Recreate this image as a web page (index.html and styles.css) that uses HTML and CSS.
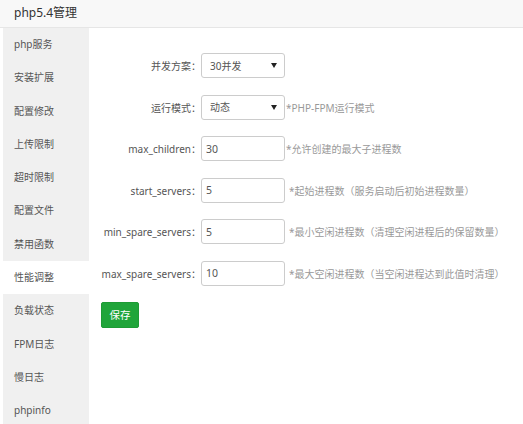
FILE: index.html
```html
<!DOCTYPE html>
<html lang="zh-CN">
<head>
<meta charset="utf-8">
<title>php5.4管理</title>
<link rel="stylesheet" href="styles.css">
</head>
<body>
<div class="header">php5.4管理</div>
<div class="main">
  <ul class="sidebar">
    <li class="side-item">php服务</li>
    <li class="side-item">安装扩展</li>
    <li class="side-item">配置修改</li>
    <li class="side-item">上传限制</li>
    <li class="side-item">超时限制</li>
    <li class="side-item">配置文件</li>
    <li class="side-item">禁用函数</li>
    <li class="side-item active">性能调整</li>
    <li class="side-item">负载状态</li>
    <li class="side-item">FPM日志</li>
    <li class="side-item">慢日志</li>
    <li class="side-item">phpinfo</li>
  </ul>
  <div class="content">
    <div class="row">
      <span class="label">并发方案：</span>
      <span class="select-wrap"><select class="select"><option>30并发</option></select></span>
    </div>
    <div class="row">
      <span class="label">运行模式：</span>
      <span class="select-wrap"><select class="select"><option>动态</option></select></span>
      <span class="hint">*PHP-FPM运行模式</span>
    </div>
    <div class="row">
      <span class="label">max_children：</span>
      <input class="input" type="text" value="30">
      <span class="hint">*允许创建的最大子进程数</span>
    </div>
    <div class="row">
      <span class="label">start_servers：</span>
      <input class="input" type="text" value="5">
      <span class="hint gap">*起始进程数（服务启动后初始进程数量）</span>
    </div>
    <div class="row">
      <span class="label">min_spare_servers：</span>
      <input class="input" type="text" value="5">
      <span class="hint gap">*最小空闲进程数（清理空闲进程后的保留数量）</span>
    </div>
    <div class="row">
      <span class="label">max_spare_servers：</span>
      <input class="input" type="text" value="10">
      <span class="hint gap">*最大空闲进程数（当空闲进程达到此值时清理）</span>
    </div>
    <button class="btn-save" type="button">保存</button>
  </div>
</div>
</body>
</html>
```

FILE: styles.css
```css
* { box-sizing: border-box; }
html, body {
  margin: 0;
  padding: 0;
  background: #fff;
  font-family: "Noto Sans", "Noto Sans CJK SC", sans-serif;
  font-size: 10px;
  color: #555;
}
.header {
  height: 28px;
  line-height: 26px;
  padding-left: 14px;
  background: #f8f8f8;
  border-bottom: 1px solid #e6e6e6;
  font-size: 12px;
  color: #333;
}
.main {
  display: flex;
  height: 396px;
  overflow: hidden;
}
.sidebar {
  list-style: none;
  margin: 0 0 0 3px;
  padding: 0;
  width: 86px;
  background: #f0f0f0;
  flex-shrink: 0;
}
.side-item {
  height: 33.3px;
  line-height: 33.3px;
  padding-left: 11px;
  color: #555;
  white-space: nowrap;
}
.side-item.active {
  background: #fff;
}
.content {
  flex: 1;
  padding: 25px 0 0 12px;
}
.row {
  display: flex;
  align-items: center;
  height: 25px;
  margin-bottom: 16.5px;
}
.label {
  width: 100px;
  text-align: right;
  white-space: nowrap;
  color: #555;
}
.select-wrap {
  position: relative;
  display: inline-block;
  width: 84px;
  height: 25px;
}
.select-wrap::after {
  content: "";
  position: absolute;
  right: 8px;
  top: 10px;
  border-left: 3px solid transparent;
  border-right: 3px solid transparent;
  border-top: 5px solid #222;
  pointer-events: none;
}
.select {
  -webkit-appearance: none;
  appearance: none;
  width: 84px;
  height: 25px;
  border: 1px solid #ccc;
  border-radius: 3px;
  background: #fff;
  padding: 0 0 0 8px;
  font: inherit;
  color: #555;
  outline: none;
}
.input {
  width: 84px;
  height: 25px;
  border: 1px solid #ccc;
  border-radius: 3px;
  padding: 0 0 0 4px;
  font: inherit;
  font-size: 10.5px;
  color: #555;
  outline: none;
}
.hint {
  margin-left: 1px;
  color: #999;
  white-space: nowrap;
}
.hint.gap {
  margin-left: 4px;
}
.btn-save {
  margin-top: -0.5px;
  height: 26px;
  width: 38px;
  padding: 0;
  border: 1px solid #1e9b35;
  border-radius: 2px;
  background: #20a53a;
  color: #fff;
  font: inherit;
  font-size: 10.5px;
}
```
